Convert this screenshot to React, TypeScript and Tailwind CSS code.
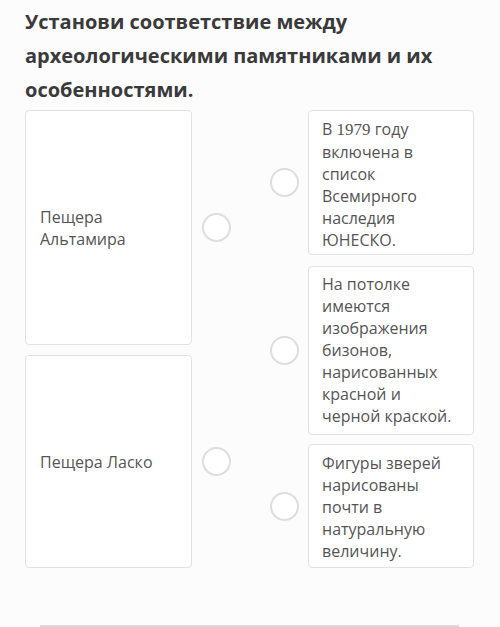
import React from "react";

const Circle = () => (
  <div className="w-[29px] h-[29px] rounded-full border-[2.5px] border-[#dedede] bg-white shrink-0" />
);

export default function App() {
  return (
    <div className="w-[500px] h-[627px] bg-[#fcfcfc] relative overflow-hidden" style={{ fontFamily: '"Open Sans", "Noto Sans", sans-serif' }}>
      <div className="pl-[25px] pr-[20px] pt-[5px] text-[20px] leading-[34px] font-bold text-[#3a3a3a]">
        Установи соответствие между археологическими памятниками и их особенностями.
      </div>
      <div className="flex px-[25px] mt-[3px] text-[16px] leading-[22px] text-[#555]">
        <div className="flex flex-col gap-[10px] w-[206px]">
          <div className="flex items-center gap-[10px] h-[235px]">
            <div className="w-[167px] h-full bg-white border border-[#e2e2e2] rounded-[4px] flex items-center px-[14px]">
              Пещера Альтамира
            </div>
            <Circle />
          </div>
          <div className="flex items-center gap-[10px] h-[213px]">
            <div className="w-[167px] h-full bg-white border border-[#e2e2e2] rounded-[4px] flex items-center px-[14px]">
              Пещера Ласко
            </div>
            <Circle />
          </div>
        </div>
        <div className="flex flex-col ml-[39px] w-[204px]">
          <div className="flex items-center gap-[9px] h-[145px]">
            <Circle />
            <div className="w-[166px] h-full bg-white border border-[#e2e2e2] rounded-[4px] px-[13px] pt-[7px]">
              В <span style={{ fontFamily: '"Liberation Serif", serif' }} className="text-[17px]">1979</span> году включена в список Всемирного наследия ЮНЕСКО.
            </div>
          </div>
          <div className="flex items-center gap-[9px] h-[169px] mt-[11px]">
            <Circle />
            <div className="w-[166px] h-full bg-white border border-[#e2e2e2] rounded-[4px] px-[13px] pt-[6px]">
              На потолке имеются изображения бизонов, нарисованных красной и черной краской.
            </div>
          </div>
          <div className="flex items-center gap-[9px] h-[124px] mt-[9px]">
            <Circle />
            <div className="w-[166px] h-full bg-white border border-[#e2e2e2] rounded-[4px] px-[13px] pt-[7px]">
              Фигуры зверей нарисованы почти в натуральную величину.
            </div>
          </div>
        </div>
      </div>
      <div className="absolute left-[40px] right-[41px] top-[625px] h-[2px] bg-[#d8d8d8]" />
    </div>
  );
}
